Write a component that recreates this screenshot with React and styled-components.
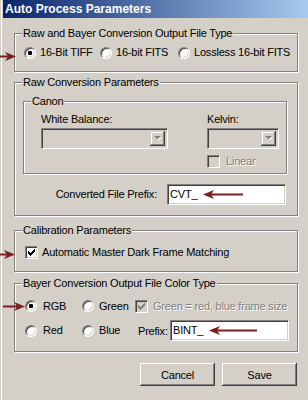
import React from "react";
import styled, { createGlobalStyle } from "styled-components";

const GlobalStyle = createGlobalStyle`
  html, body {
    margin: 0;
    padding: 0;
    background: #d4d0c8;
    overflow: hidden;
  }
  body {
    font-family: "Liberation Sans", Arial, sans-serif;
    font-size: 11px;
    letter-spacing: -0.2px;
    color: #000;
  }
`;

const Window = styled.div`
  width: 308px;
  height: 400px;
  box-sizing: border-box;
  padding-left: 3px;
  background: #d4d0c8;
  box-shadow: inset 1px 0 #d4d0c8, inset 2px 0 #fff;
  overflow: hidden;
`;

const TitleBar = styled.div`
  height: 18px;
  display: flex;
  align-items: center;
  padding-left: 2px;
  background: linear-gradient(to right, #0a246a, #a6caf0);
  color: #fff;
  font-weight: bold;
  font-size: 12px;
  letter-spacing: 0;
  white-space: nowrap;
`;

const Content = styled.div`
  display: flex;
  flex-direction: column;
  padding: 9px 10px 0 11px;
`;

const Group = styled.fieldset`
  margin: ${({ $mt }) => $mt || 0}px ${({ $mr }) => $mr || 0}px 0
    ${({ $ml }) => $ml || 0}px;
  padding: 0;
  min-width: 0;
  border: 1px solid #808080;
  box-shadow: inset 1px 1px #fff, 1px 1px #fff;
`;

const Legend = styled.legend`
  margin-left: 7px;
  padding: 0 1px;
  font-size: 11px;
  line-height: 13px;
  background: #d4d0c8;
  white-space: nowrap;
`;

const RadioRow = styled.div`
  position: relative;
  display: flex;
  align-items: center;
  padding: 6px 0 12px 9px;
  height: 13px;
`;

const Item = styled.label`
  display: flex;
  align-items: center;
  gap: ${({ $gap }) => $gap || 4}px;
  width: ${({ $w }) => ($w ? `${$w}px` : "auto")};
  line-height: 13px;
  white-space: nowrap;
  color: ${({ $disabled }) => ($disabled ? "#808080" : "#000")};
  text-shadow: ${({ $disabled }) => ($disabled ? "1px 1px #fff" : "none")};
`;

const RadioCircle = styled.span`
  position: relative;
  flex: none;
  width: 10px;
  height: 10px;
  border-radius: 50%;
  border: 1px solid;
  border-color: #808080 #fff #fff #808080;
  box-shadow: inset 1px 1px #404040, inset -1px -1px #d4d0c8;
  background: #fff;

  &::after {
    content: "";
    display: ${({ $checked }) => ($checked ? "block" : "none")};
    position: absolute;
    left: 3px;
    top: 3px;
    width: 4px;
    height: 4px;
    border-radius: 1px;
    background: #000;
  }
`;

const CheckBox = styled.span`
  flex: none;
  display: flex;
  align-items: center;
  justify-content: center;
  width: 11px;
  height: 11px;
  border: 1px solid;
  border-color: #808080 #fff #fff #808080;
  box-shadow: inset 1px 1px #404040, inset -1px -1px #d4d0c8;
  background: ${({ $disabled }) => ($disabled ? "#d4d0c8" : "#fff")};
  text-shadow: none;
`;

const CanonBody = styled.div`
  display: grid;
  grid-template-columns: 127px 72px;
  column-gap: 39px;
  padding: 5px 0 5px 17px;
`;

const FieldLabel = styled.div`
  line-height: 13px;
  height: 13px;
  white-space: nowrap;
`;

const Combo = styled.div`
  margin-top: 2px;
  height: 21px;
  box-sizing: border-box;
  display: flex;
  justify-content: flex-end;
  align-items: stretch;
  padding: 2px;
  border: 1px solid;
  border-color: #808080 #fff #fff #808080;
  box-shadow: inset 1px 1px #404040, inset -1px -1px #d4d0c8;
  background: #d4d0c8;
`;

const ComboButton = styled.div`
  width: 15px;
  display: flex;
  align-items: center;
  justify-content: center;
  box-shadow: inset -1px -1px #404040, inset 1px 1px #d4d0c8,
    inset -2px -2px #808080, inset 2px 2px #fff;
`;

const LinearRow = styled.div`
  grid-column: 2;
  margin-top: 6px;
`;

const PrefixRow = styled.div`
  display: flex;
  justify-content: flex-end;
  align-items: center;
  gap: 10px;
  margin-top: 10px;
  padding: 0 11px 10px 0;
`;

const TextBox = styled.div`
  width: ${({ $w }) => $w}px;
  height: 21px;
  box-sizing: border-box;
  display: flex;
  align-items: center;
  gap: ${({ $gap }) => $gap}px;
  padding-left: 2px;
  border: 1px solid;
  border-color: #808080 #fff #fff #808080;
  box-shadow: inset 1px 1px #404040, inset -1px -1px #d4d0c8;
  background: #fff;
  line-height: 13px;
`;

const CheckRow = styled.div`
  position: relative;
  display: flex;
  align-items: center;
  height: 13px;
  padding: 9px 0 12px 10px;
`;

const BayerGrid = styled.div`
  display: grid;
  grid-template-columns: 57px 53px 1fr;
  grid-template-rows: 14px 21px;
  row-gap: 7px;
  align-items: center;
  padding: 9px 8px 10px 10px;
`;

const Cell = styled.div`
  position: relative;
  display: flex;
  align-items: center;
  justify-content: ${({ $spread }) => ($spread ? "space-between" : "flex-start")};
  padding-left: ${({ $pl }) => $pl || 0}px;
  white-space: nowrap;
`;

const ButtonRow = styled.div`
  display: flex;
  justify-content: flex-end;
  gap: 7px;
  margin: 11px 1px 0 0;
`;

const Button = styled.button`
  width: 75px;
  height: 23px;
  padding: 0;
  border: none;
  background: #d4d0c8;
  font-family: "Liberation Sans", Arial, sans-serif;
  font-size: 11px;
  letter-spacing: -0.2px;
  color: #000;
  box-shadow: inset -1px -1px #404040, inset 1px 1px #fff,
    inset -2px -2px #808080, inset 2px 2px #d4d0c8;
`;

const MarginArrow = styled.svg`
  position: absolute;
  left: ${({ $left }) => $left}px;
  top: 50%;
  margin-top: -4px;
`;

const ARROW = "#7b1f1f";

function RightArrow({ left }) {
  return (
    <MarginArrow $left={left} width="22" height="9" viewBox="0 0 22 9">
      <rect x="0" y="3.5" width="14" height="2" fill={ARROW} />
      <polygon points="11,0 22,4.5 11,9 14,4.5" fill={ARROW} />
    </MarginArrow>
  );
}

function LeftArrow({ width }) {
  return (
    <svg width={width} height="9" viewBox={`0 0 ${width} 9`}>
      <polygon points={`0,4.5 11,0 8,4.5 11,9`} fill={ARROW} />
      <rect x="7" y="3.5" width={width - 7} height="2" fill={ARROW} />
    </svg>
  );
}

const CHECK_COLS = [2, 3, 4, 3, 2, 1, 0];

function CheckMark({ color }) {
  const d = CHECK_COLS.map((y, x) => `M${x} ${y}h1v3h-1z`).join("");
  return (
    <svg width="7" height="7" viewBox="0 0 7 7" shapeRendering="crispEdges">
      <path d={d} fill={color} />
    </svg>
  );
}

function Radio({ label, checked, width, gap }) {
  return (
    <Item $w={width} $gap={gap}>
      <RadioCircle $checked={checked} />
      {label}
    </Item>
  );
}

function Check({ label, checked, disabled, gap }) {
  return (
    <Item $gap={gap} $disabled={disabled}>
      <CheckBox $disabled={disabled}>
        {checked && <CheckMark color={disabled ? "#808080" : "#000"} />}
      </CheckBox>
      {label}
    </Item>
  );
}

function ComboBox() {
  return (
    <Combo>
      <ComboButton>
        <svg width="8" height="5" viewBox="0 0 8 5">
          <polygon points="1,1 8,1 4.5,4.5" fill="#fff" />
          <polygon points="0,0 7,0 3.5,3.5" fill="#808080" />
        </svg>
      </ComboButton>
    </Combo>
  );
}

export default function App() {
  return (
    <>
      <GlobalStyle />
      <Window>
        <TitleBar>Auto Process Parameters</TitleBar>
        <Content>
          <Group>
            <Legend>Raw and Bayer Conversion Output File Type</Legend>
            <RadioRow>
              <RightArrow left={-21} />
              <Radio label="16-Bit TIFF" checked width={76} />
              <Radio label="16-bit FITS" width={78} />
              <Radio label="Lossless 16-bit FITS" />
            </RadioRow>
          </Group>

          <Group $mt={4}>
            <Legend>Raw Conversion Parameters</Legend>
            <Group $mt={6} $ml={8} $mr={10}>
              <Legend>Canon</Legend>
              <CanonBody>
                <FieldLabel>White Balance:</FieldLabel>
                <FieldLabel>Kelvin:</FieldLabel>
                <ComboBox />
                <ComboBox />
                <LinearRow>
                  <Check label="Linear" disabled gap={6} />
                </LinearRow>
              </CanonBody>
            </Group>
            <PrefixRow>
              <FieldLabel>Converted File Prefix:</FieldLabel>
              <TextBox $w={119} $gap={6}>
                CVT_
                <LeftArrow width={40} />
              </TextBox>
            </PrefixRow>
          </Group>

          <Group $mt={8}>
            <Legend>Calibration Parameters</Legend>
            <CheckRow>
              <RightArrow left={-22} />
              <Check label="Automatic Master Dark Frame Matching" checked gap={4} />
            </CheckRow>
          </Group>

          <Group $mt={5}>
            <Legend>Bayer Conversion Output File Color Type</Legend>
            <BayerGrid>
              <Cell>
                <RightArrow left={-22} />
                <Radio label="RGB" checked gap={6} />
              </Cell>
              <Cell>
                <Radio label="Green" gap={5} />
              </Cell>
              <Cell>
                <Check label="Green = red, blue frame size" checked disabled gap={5} />
              </Cell>
              <Cell>
                <Radio label="Red" gap={6} />
              </Cell>
              <Cell>
                <Radio label="Blue" gap={5} />
              </Cell>
              <Cell $spread $pl={3}>
                <span>Prefix:</span>
                <TextBox $w={119} $gap={6}>
                  BINT_
                  <LeftArrow width={48} />
                </TextBox>
              </Cell>
            </BayerGrid>
          </Group>

          <ButtonRow>
            <Button>Cancel</Button>
            <Button>Save</Button>
          </ButtonRow>
        </Content>
      </Window>
    </>
  );
}
